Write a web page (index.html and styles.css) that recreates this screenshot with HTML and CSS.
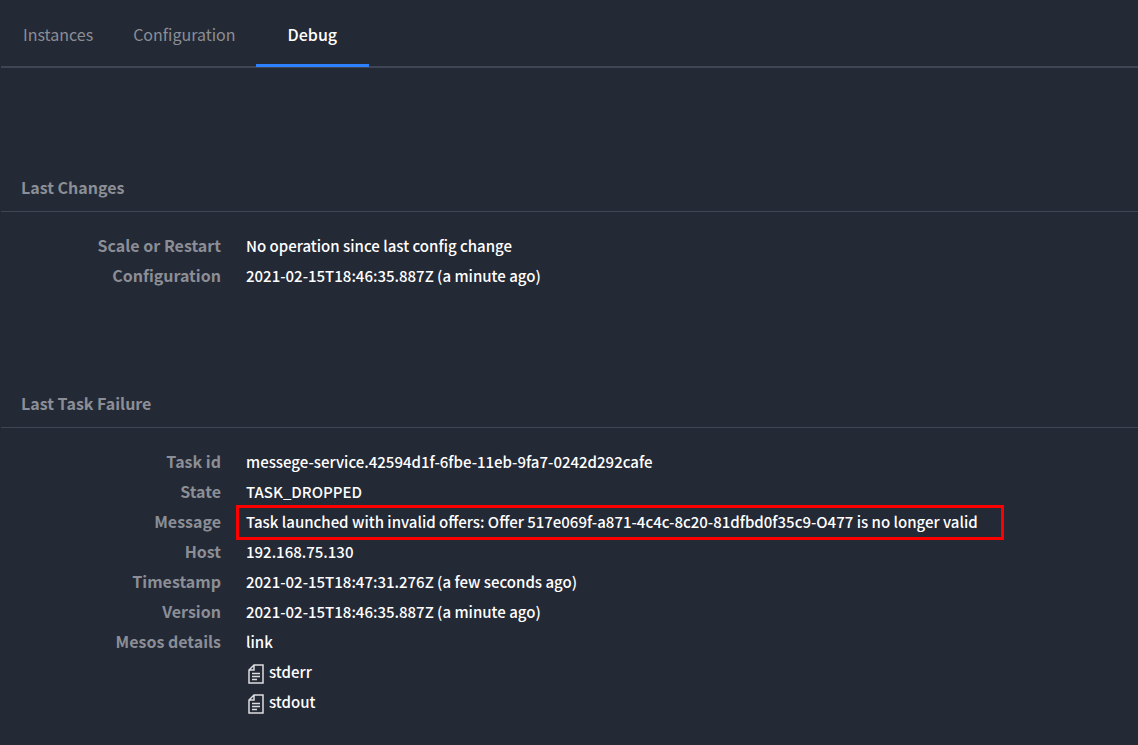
FILE: index.html
```
<!DOCTYPE html>
<html lang="en">
<head>
  <meta charset="UTF-8">
  <meta name="viewport" content="width=device-width, initial-scale=1.0">
  <title>Service Debug</title>
  <link rel="stylesheet" href="styles.css">
</head>
<body>
  <nav class="tabs">
    <a href="#instances" class="tab">Instances</a>
    <a href="#configuration" class="tab">Configuration</a>
    <a href="#debug" class="tab active">Debug</a>
  </nav>

  <main>
    <section class="panel">
      <h2>Last Changes</h2>
      <dl class="details">
        <dt>Scale or Restart</dt>
        <dd>No operation since last config change</dd>
        <dt>Configuration</dt>
        <dd>2021-02-15T18:46:35.887Z (a minute ago)</dd>
      </dl>
    </section>

    <section class="panel">
      <h2>Last Task Failure</h2>
      <dl class="details">
        <dt>Task id</dt>
        <dd>messege-service.42594d1f-6fbe-11eb-9fa7-0242d292cafe</dd>
        <dt>State</dt>
        <dd>TASK_DROPPED</dd>
        <dt>Message</dt>
        <dd class="highlight">Task launched with invalid offers: Offer 517e069f-a871-4c4c-8c20-81dfbd0f35c9-O477 is no longer valid</dd>
        <dt>Host</dt>
        <dd>192.168.75.130</dd>
        <dt>Timestamp</dt>
        <dd>2021-02-15T18:47:31.276Z (a few seconds ago)</dd>
        <dt>Version</dt>
        <dd>2021-02-15T18:46:35.887Z (a minute ago)</dd>
        <dt>Mesos details</dt>
        <dd><a href="#mesos">link</a></dd>
        <dd>
          <a href="#stderr" class="file">
            <svg class="icon" viewBox="0 0 16 20" aria-hidden="true">
              <path d="M6 1H15V19H1V6Z M6 1V6H1"/>
              <path d="M4 9.5H12M4 12.5H12M4 15.5H9"/>
            </svg>
            stderr
          </a>
        </dd>
        <dd>
          <a href="#stdout" class="file">
            <svg class="icon" viewBox="0 0 16 20" aria-hidden="true">
              <path d="M6 1H15V19H1V6Z M6 1V6H1"/>
              <path d="M4 9.5H12M4 12.5H12M4 15.5H9"/>
            </svg>
            stdout
          </a>
        </dd>
      </dl>
    </section>
  </main>
</body>
</html>
```
FILE: styles.css
```
* { margin: 0; padding: 0; box-sizing: border-box; }
body {
  font-family: 'Noto Sans CJK SC', 'Noto Sans', sans-serif;
  font-size: 16px;
  line-height: 30px;
  background: #242936;
  color: #fff;
}
a {
  color: inherit;
  text-decoration: none;
}

/* Tabs */
.tabs {
  display: flex;
  height: 68px;
  margin-left: 1px;
  padding-left: 2px;
  border-bottom: 2px solid #3f4555;
}
.tab {
  height: 67px;
  padding: 19px 20px;
  color: #8b8e95;
}
.tab.active {
  padding: 19px 32px;
  border-bottom: 3px solid #2d81ff;
  color: #fff;
  font-weight: 500;
}

/* Sections */
.panel {
  padding-top: 104px;
  margin-left: 1px;
}
.panel + .panel {
  padding-top: 98px;
}
.panel h2 {
  padding: 0 20px 9px;
  border-bottom: 1px solid #3f4555;
  color: #8b8e95;
  font-size: 16px;
  font-weight: 700;
}
.details {
  display: grid;
  grid-template-columns: 220px 1fr;
  column-gap: 25px;
  padding-top: 18px;
}
.details dt {
  grid-column: 1;
  color: #8b8e95;
  font-weight: 700;
  text-align: right;
}
.details dd {
  grid-column: 2;
  padding-top: 2px;
  font-size: 15px;
  font-weight: 500;
  line-height: 28px;
}
/* red frame round the failure message */
.details .highlight {
  justify-self: start;
  margin: -1px 0 -4px -10px;
  padding: 0 23px 1px 7px;
  border: 3px solid #f00;
}

/* Log files */
.file {
  display: flex;
  align-items: center;
  gap: 5px;
}
.icon {
  width: 16px;
  height: 20px;
  margin: 3px 0 0 2px;
  fill: none;
  stroke: #dcdde0;
  stroke-width: 1.5;
}
```
